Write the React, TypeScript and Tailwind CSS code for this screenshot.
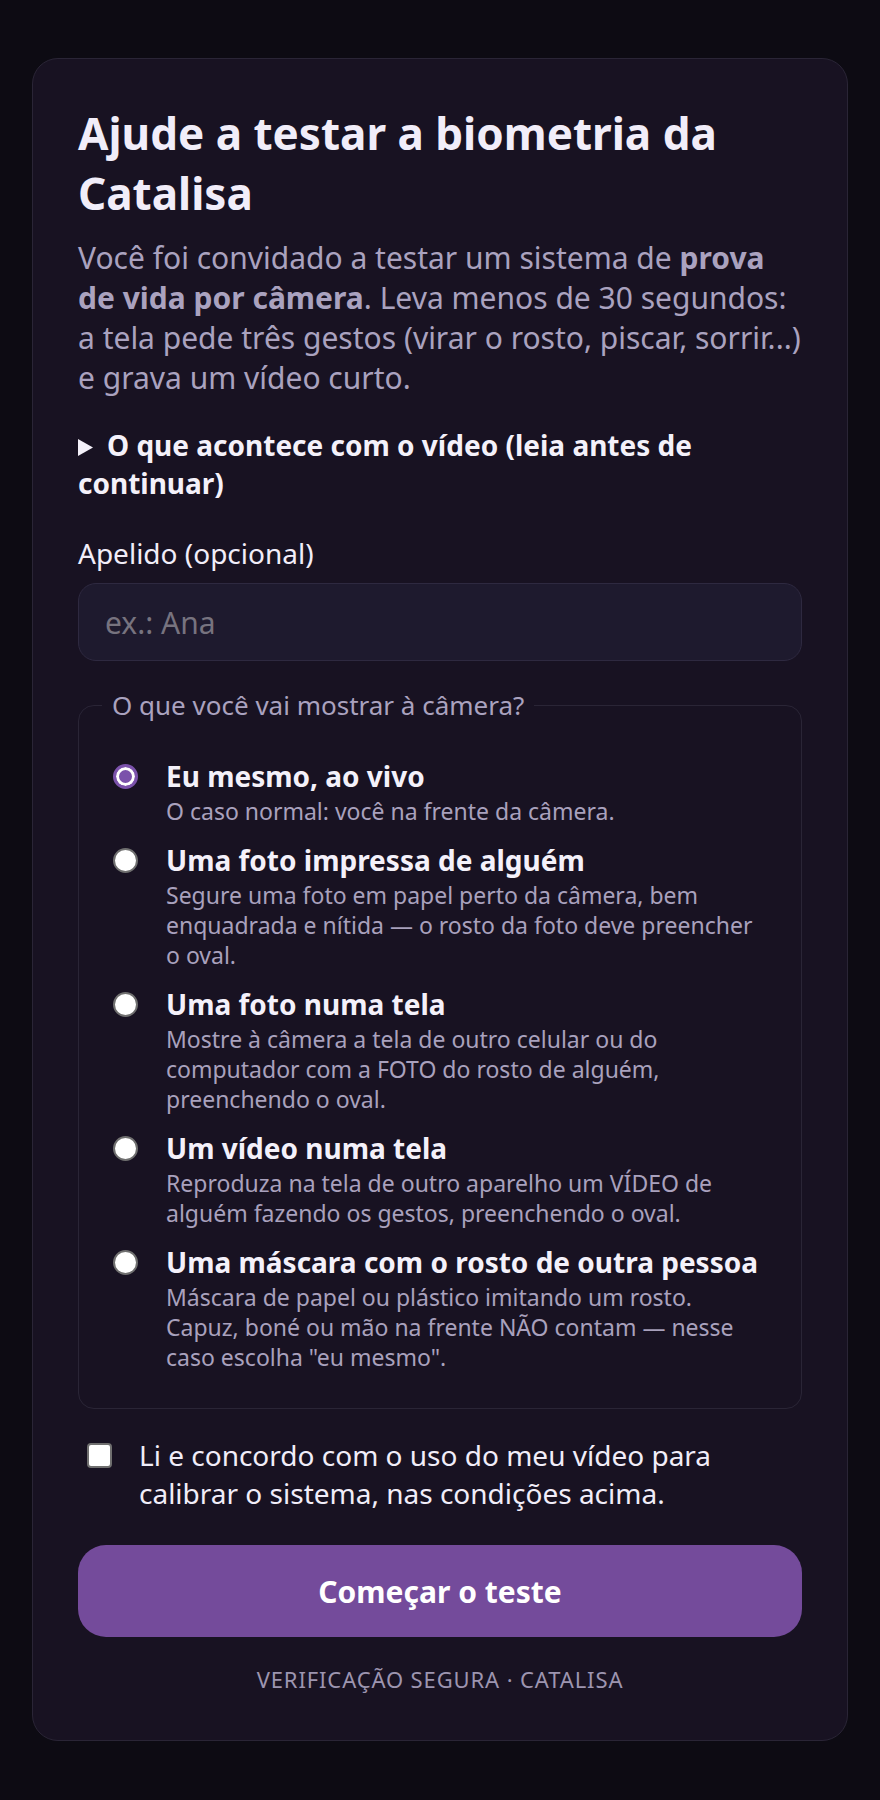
import { useState } from "react";

type Option = {
    id: string;
    title: string;
    desc: string;
};

const OPTIONS: Option[] = [
    { id: "live", title: "Eu mesmo, ao vivo", desc: "O caso normal: você na frente da câmera." },
    {
        id: "print",
        title: "Uma foto impressa de alguém",
        desc: "Segure uma foto em papel perto da câmera, bem enquadrada e nítida — o rosto da foto deve preencher o oval.",
    },
    {
        id: "screen-photo",
        title: "Uma foto numa tela",
        desc: "Mostre à câmera a tela de outro celular ou do computador com a FOTO do rosto de alguém, preenchendo o oval.",
    },
    {
        id: "screen-video",
        title: "Um vídeo numa tela",
        desc: "Reproduza na tela de outro aparelho um VÍDEO de alguém fazendo os gestos, preenchendo o oval.",
    },
    {
        id: "mask",
        title: "Uma máscara com o rosto de outra pessoa",
        desc: 'Máscara de papel ou plástico imitando um rosto. Capuz, boné ou mão na frente NÃO contam — nesse caso escolha "eu mesmo".',
    },
];

export default function App() {
    const [choice, setChoice] = useState("live");
    const [agreed, setAgreed] = useState(false);
    const [nickname, setNickname] = useState("");

    return (
        <div
            className="min-h-screen bg-[#0d0b13] px-8 pt-[58px] pb-[60px]"
            style={{ fontFamily: '"Noto Sans", "Open Sans", sans-serif' }}
        >
            <div className="mx-auto w-[816px] rounded-[26px] border border-[#2a2536] bg-[#181222] px-[45px] pt-[44px] pb-[46px]">
                {/* Intro */}
                <h1 className="text-[44px] font-bold leading-[60px] text-[#f1edf9]">
                    Ajude a testar a biometria da Catalisa
                </h1>
                <p className="mt-[15px] text-[30px] leading-[40px] text-[#aaa2bf]">
                    Você foi convidado a testar um sistema de <strong className="font-bold">prova de vida por câmera</strong>.
                    Leva menos de 30 segundos: a tela pede três gestos (virar o rosto, piscar, sorrir...) e grava um vídeo
                    curto.
                </p>

                <details className="mt-[28px]">
                    <summary className="cursor-pointer list-none text-[28px] font-bold leading-[38px] text-[#f4f1fa] [&::-webkit-details-marker]:hidden">
                        <svg viewBox="0 0 15 17" className="mr-[14px] inline-block h-[17px] w-[15px] align-[0px]">
                            <path d="M0 0 L15 8.5 L0 17 Z" fill="#f4f1fa" />
                        </svg>
                        O que acontece com o vídeo (leia antes de continuar)
                    </summary>
                </details>

                {/* Nickname */}
                <label htmlFor="nick" className="mt-[32px] block text-[28px] leading-[38px] text-[#f1edf9]">
                    Apelido (opcional)
                </label>
                <input
                    id="nick"
                    type="text"
                    value={nickname}
                    onChange={(e) => setNickname(e.target.value)}
                    placeholder="ex.: Ana"
                    className="mt-[11px] block h-[78px] w-full rounded-[18px] border border-[#2e2940] bg-[#1e1a2e] px-[26px] text-[30px] text-[#f1edf9] outline-none placeholder:text-[#77737f]"
                />

                {/* What will be shown */}
                <fieldset className="mt-[26px] rounded-[16px] border border-[#2a2536] px-[34px] pt-[34px] pb-[36px]">
                    <legend className="ml-[-11px] px-[10px] text-[26px] leading-[36px] text-[#aaa2bf]">
                        O que você vai mostrar à câmera?
                    </legend>
                    <div className="flex flex-col gap-[15px]">
                        {OPTIONS.map((opt) => (
                            <label key={opt.id} className="flex cursor-pointer items-start gap-[28px]">
                                <input
                                    type="radio"
                                    name="kind"
                                    value={opt.id}
                                    checked={choice === opt.id}
                                    onChange={() => setChoice(opt.id)}
                                    className="mt-[7px] h-[25px] w-[25px] shrink-0 appearance-none rounded-full border-2 border-[#6f6f6f] bg-white checked:border-[3px] checked:border-[#7b52ab] checked:bg-[#7b52ab] checked:shadow-[inset_0_0_0_3px_#ffffff]"
                                />
                                <span className="flex flex-col">
                                    <span className="text-[28px] font-bold leading-[39px] text-[#f4f1fa]">{opt.title}</span>
                                    <span className="text-[23px] leading-[30px] text-[#a9a1bd]">{opt.desc}</span>
                                </span>
                            </label>
                        ))}
                    </div>
                </fieldset>

                {/* Consent */}
                <label className="mt-[27px] flex cursor-pointer items-start gap-[27px] pl-[9px]">
                    <input
                        type="checkbox"
                        checked={agreed}
                        onChange={(e) => setAgreed(e.target.checked)}
                        className="mt-[7px] h-[25px] w-[25px] shrink-0 appearance-none rounded-[4px] border-2 border-[#6f6f6f] bg-white checked:border-[#7b52ab] checked:bg-[#7b52ab]"
                    />
                    <span className="text-[28px] leading-[38px] text-[#f1edf9]">
                        Li e concordo com o uso do meu vídeo para calibrar o sistema, nas condições acima.
                    </span>
                </label>

                <button
                    type="button"
                    className="mt-[33px] block h-[92px] w-full rounded-[28px] bg-[#744b9b] text-[30px] font-bold text-white"
                >
                    Começar o teste
                </button>

                <p className="mt-[27px] text-center text-[22px] leading-[30px] tracking-[0.04em] text-[#9d95b0]">
                    VERIFICAÇÃO SEGURA · CATALISA
                </p>
            </div>
        </div>
    );
}
